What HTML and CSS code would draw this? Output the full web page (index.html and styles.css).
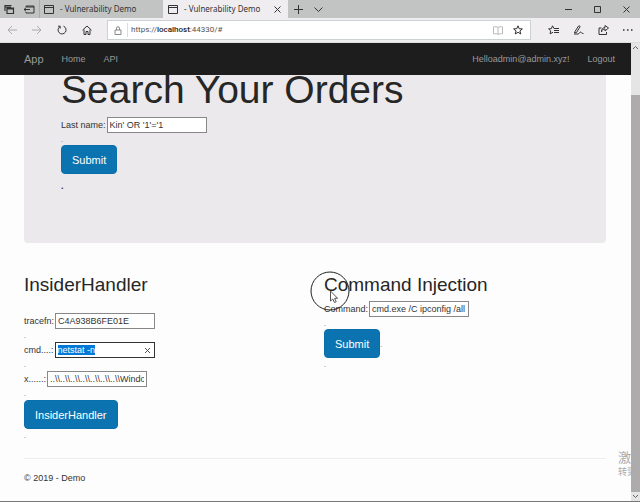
FILE: index.html
```html
<!DOCTYPE html>
<html lang="en">
<head>
<meta charset="utf-8">
<title>- Vulnerability Demo</title>
<link rel="stylesheet" href="styles.css">
</head>
<body>
<div class="browser">
  <header class="tabbar">
    <div class="tab-tools">
      <button class="icon-btn" type="button" aria-label="Tabs you've set aside"><svg width="11" height="11" viewBox="0 0 11 11"><path d="M1 7V1.5h6.500M1 3h6M3 9.500V4h6.500v5.500zM3 5h6.500" stroke-width="1.200"/></svg></button>
      <button class="icon-btn" type="button" aria-label="Set these tabs aside"><svg width="12" height="11" viewBox="0 0 12 11"><path d="M3 3V2h8v7H3V8M3 3h8M1 5.500h6M3 3.800L1 5.500l2 1.700"/></svg></button>
    </div>
    <div class="tab">
      <svg width="10" height="9" viewBox="0 0 10 9"><path d="M.5.5h9v8h-9zM.5 2.500h9"/></svg>
      <span>- Vulnerability Demo</span>
    </div>
    <div class="tab tab-active">
      <svg width="10" height="9" viewBox="0 0 10 9"><path d="M.5.5h9v8h-9zM.5 2.500h9"/></svg>
      <span>- Vulnerability Demo</span>
      <button class="icon-btn tab-close" type="button" aria-label="Close tab"><svg width="7" height="7" viewBox="0 0 7 7"><path d="M.5.5l6 6M6.500.5l-6 6"/></svg></button>
    </div>
    <div class="tab-add">
      <button class="icon-btn" type="button" aria-label="New tab"><svg width="9" height="9" viewBox="0 0 9 9"><path d="M4.500 0v9M0 4.500h9"/></svg></button>
      <button class="icon-btn" type="button" aria-label="Tab previews"><svg width="9" height="9" viewBox="0 0 9 9"><path d="M.5 2.500l4 4 4-4"/></svg></button>
    </div>
    <div class="window-tools">
      <button class="icon-btn" type="button" aria-label="Minimize"><svg width="7" height="7" viewBox="0 0 7 7"><path d="M0 3.500h7"/></svg></button>
      <button class="icon-btn" type="button" aria-label="Maximize"><svg width="7" height="7" viewBox="0 0 7 7"><path d="M.5.5h6v6h-6z"/></svg></button>
      <button class="icon-btn" type="button" aria-label="Close"><svg width="7" height="7" viewBox="0 0 7 7"><path d="M.5.5l6 6M6.500.5l-6 6"/></svg></button>
    </div>
  </header>
  <div class="toolbar">
    <div class="history">
      <button class="icon-btn dim" type="button" aria-label="Back"><svg width="10" height="10" viewBox="0 0 10 10"><path d="M10 5H1M5 1L1 5l4 4"/></svg></button>
      <button class="icon-btn dim" type="button" aria-label="Forward"><svg width="10" height="10" viewBox="0 0 10 10"><path d="M0 5h9M5 1l4 4-4 4"/></svg></button>
      <button class="icon-btn" type="button" aria-label="Refresh"><svg width="10" height="10" viewBox="0 0 10 10"><path d="M6.500 1.200a4 4 0 1 1-3.500.3M1 1.200h2.200v2.300"/></svg></button>
      <button class="icon-btn" type="button" aria-label="Home"><svg width="10" height="10" viewBox="0 0 10 10"><path d="M.5 5.200L5 1l4.500 4.200M2 4.500v5h2v-3h2v3h2v-5"/></svg></button>
    </div>
    <div class="address">
      <svg class="lock" width="8" height="9" viewBox="0 0 8 9"><path d="M1 4h6v4.500H1zM2.500 4V2.200a1.500 1.500 0 0 1 3 0V4"/></svg>
      <a class="url" href="#">https://<b>localhost</b>:44330/#</a>
      <svg class="book" width="10" height="9" viewBox="0 0 10 9"><path d="M5 1.500V8.500M5 1.500L4 .8H.5v7H4l1 .7 1-.7h3.500v-7H6z"/></svg>
      <button class="icon-btn" type="button" aria-label="Add to favorites"><svg width="10" height="10" viewBox="0 0 10 10"><path d="M5 .8l1.200 2.900 3.200.2-2.500 2 .9 3.100L5 7.300 2.200 9l.9-3.100-2.500-2 3.200-.2z"/></svg></button>
    </div>
    <div class="actions">
      <button class="icon-btn" type="button" aria-label="Favorites"><svg width="11" height="10" viewBox="0 0 11 10"><path d="M6 3.500L4.500.8 3.400 3.600.6 3.900l2.100 2-.6 3L5 7.200M6 3.500h5M6 5.500h5M6 7.500h5"/></svg></button>
      <button class="icon-btn" type="button" aria-label="Add notes"><svg width="11" height="10" viewBox="0 0 11 10"><path d="M2 6.500L5.500 1c.8-.8 2 .2 1.400 1L3.500 7.500 1.500 8zM1 9h4c1.500 0 1.500-2 2.500-2s.5 1.500 3 1.500"/></svg></button>
      <button class="icon-btn" type="button" aria-label="Share"><svg width="11" height="10" viewBox="0 0 11 10"><path d="M3.500 3H1v6.500h7.500V7M3.500 7c.3-2.500 2-3 3.500-3V6l3.500-3L7 .5v2C5 2.500 3.500 4 3.500 7z"/></svg></button>
      <button class="icon-btn" type="button" aria-label="Settings and more"><svg width="10" height="10" viewBox="0 0 10 10"><path d="M0 5h1.500M4 5h1.500M8 5h1.500" stroke-width="1.400"/></svg></button>
    </div>
  </div>

  <div class="viewport">
    <div class="page">
      <nav class="navbar">
        <a class="brand" href="#">App</a>
        <a href="#">Home</a>
        <a href="#">API</a>
        <a class="user" href="#">Helloadmin@admin.xyz!</a>
        <a href="#">Logout</a>
      </nav>
      <main class="container">
        <section class="jumbotron">
          <h1>Search Your Orders</h1>
          <form>
            <div class="field"><label for="lastname">Last name:</label><input id="lastname" type="text" value="Kin' OR '1'='1"></div>
            <div class="dot">.</div>
            <button class="btn" type="button">Submit</button>
          </form>
          <p class="result">.</p>
        </section>
        <div class="columns">
          <section class="column">
            <h2>InsiderHandler</h2>
            <form class="handler">
              <div class="field"><label for="tracefn">tracefn:</label><input id="tracefn" type="text" value="C4A938B6FE01E"></div>
              <div class="dot">.</div>
              <div class="field"><label for="cmd">cmd....:</label><span class="clearable"><input id="cmd" type="text" value="netstat -n"><button class="icon-btn clear" type="button" aria-label="Clear"><svg width="7" height="7" viewBox="0 0 7 7"><path d="M1 1l5 5M6 1L1 6"/></svg></button></span></div>
              <div class="dot">.</div>
              <div class="field"><label for="x">x......:</label><input id="x" type="text" value="..\\..\\..\\..\\..\\..\\..\\Windows"></div>
              <div class="dot">.</div>
              <button class="btn" type="button">InsiderHandler</button>
              <div class="dot">.</div>
            </form>
          </section>
          <section class="column">
            <h2>Command Injection</h2>
            <form>
              <div class="field"><label for="command">Command:</label><input id="command" type="text" value="cmd.exe /C ipconfig /all"></div>
              <div class="dot">.</div>
              <div class="submit-row"><button class="btn" type="button">Submit</button><span class="dot">.</span></div>
              <div class="dot">.</div>
            </form>
            <svg class="pointer" width="40" height="40" viewBox="0 0 40 40"><circle cx="20" cy="20" r="19"/><path class="arrow" d="M20.500 20v10l2.300-2 1.700 3.500 1.700-.8-1.600-3.400h3z"/></svg>
          </section>
        </div>
        <footer>© 2019 - Demo</footer>
      </main>
    </div>
    <div class="scrollbar">
      <svg width="9" height="9" viewBox="0 0 9 9"><path d="M2 6l2.500-2.500L7 6"/></svg>
      <div class="thumb"></div>
      <svg width="9" height="9" viewBox="0 0 9 9"><path d="M2 3l2.500 2.500L7 3"/></svg>
    </div>
    <div class="watermark"><div class="watermark-title">激</div><div>转到</div></div>
  </div>
</div>
<script>
  document.getElementById("cmd").select();
</script>
</body>
</html>
```

FILE: styles.css
```css
* { box-sizing: border-box; }

body {
  margin: 0;
  background: #fdfdfe;
  color: #333;
  font: 9px/12px "Liberation Sans", Arial, sans-serif;
}

svg { display: block; flex: none; fill: none; stroke: currentColor; }
a { color: inherit; text-decoration: none; }
button, input { font: inherit; color: inherit; }

.browser {
  display: flex;
  flex-direction: column;
  min-height: 100vh;
  border-bottom: 1px solid #777;
}

.icon-btn { display: block; padding: 0; border: 0; background: none; }

/* Window chrome */
.tabbar {
  display: flex;
  height: 18px;
  background: #c2c4c3;
  color: #333;
  font: 8px/12px "Noto Sans", "Open Sans", sans-serif;
}
.tab-tools { display: flex; align-items: center; gap: 8px; padding: 0 4px; border-right: 1px solid #aaa; }
.tab { display: flex; align-items: center; gap: 6px; width: 123px; padding: 0 4px; white-space: nowrap; }
.tab-active { width: 125px; padding: 0 7px 0 5px; background: #efedf0; }
.tab-close { margin-left: auto; }
.tab-add { display: flex; align-items: center; gap: 11px; padding-left: 6px; }
.window-tools { display: flex; align-items: center; gap: 22px; margin-left: auto; padding-right: 10px; }

.toolbar {
  display: flex;
  align-items: center;
  height: 25px;
  background: #efedf0;
  color: #333;
  border-bottom: 1px solid #ddd;
}
.history { display: flex; gap: 15px; width: 107px; padding-left: 7px; }
.dim { color: #aaa; }
.address {
  display: flex;
  flex: 1;
  align-items: center;
  gap: 10px;
  height: 20px;
  padding: 0 7px 0 6px;
  border: 1px solid #ccd2d4;
  background: #fff;
}
.lock { color: #888; }
.url {
  flex: 1;
  margin-left: -5px;
  padding-left: 3px;
  border-left: 1px solid #ddd;
  color: #555;
  font: 8px/14px Roboto, "Open Sans", sans-serif;
}
.url b { color: #222; font-weight: 500; }
.book { color: #bbb; }
.actions { display: flex; gap: 14px; padding: 0 7px 0 17px; }

/* Page */
.viewport { position: relative; display: flex; flex: 1; overflow: hidden; }
.page { flex: 1; min-width: 0; }

.navbar {
  position: relative;
  z-index: 1;
  display: flex;
  align-items: center;
  gap: 18px;
  height: 32px;
  padding: 0 16px 0 24px;
  background: #1d1d1d;
  color: #999;
}
.brand { font-size: 11px; }
.user { margin-left: auto; }

.container { padding: 0 25px 0 24px; }

.jumbotron {
  height: 168px;
  padding: 0 37px;
  border-radius: 0 0 4px 4px;
  background: #ebe9eb;
}
h1, h2 { margin: 0; color: #262626; font-weight: 400; white-space: nowrap; }
h1 { margin-bottom: 12px; font-size: 39px; line-height: 30px; }
h2 { margin-bottom: 5px; font-size: 19px; line-height: 22px; }

.field { display: flex; align-items: center; gap: 1px; white-space: nowrap; }
input {
  width: 100px;
  height: 16px;
  padding: 0 2px;
  border: 1px solid #888;
  background: #fff;
}
input:focus { outline: 0; border-color: #333; }
input::selection { background: #0078d7; color: #fff; }
.clearable { position: relative; }
.clearable input { display: block; }
.clear { position: absolute; top: 5px; right: 4px; color: #555; }

.dot { height: 12px; color: #555; font-size: 7px; line-height: 14px; }
.handler .dot { height: 13px; }
.result { margin: 6px 0 0; font-weight: 700; }

.btn {
  display: block;
  height: 29px;
  padding: 0 10px;
  border: 1px solid #0a6fa8;
  border-radius: 4px;
  background: #0b74b0;
  color: #fff;
  font-size: 11px;
}
.submit-row { display: flex; align-items: center; }

.columns { display: grid; grid-template-columns: 1fr 1fr; gap: 18px; padding-top: 31px; }
.column { position: relative; }
.handler { padding-top: 12px; }

.pointer { position: absolute; top: -3px; left: -14px; stroke: #222; }
.arrow { fill: #fff; stroke: #555; }

footer { margin-top: 16px; padding: 13px 0 16px; border-top: 1px solid #eee; }

.scrollbar { display: flex; flex-direction: column; width: 9px; background: #e6e5e6; color: #666; }
.thumb { flex: 1; margin-top: 43px; background: #aeabad; }

.watermark {
  position: absolute;
  right: 0;
  bottom: 22px;
  width: 22px;
  overflow: hidden;
  color: #aaa;
  font: 9px/14px "Noto Sans CJK SC", sans-serif;
  white-space: nowrap;
}
.watermark-title { font-size: 13px; line-height: 16px; }
```
